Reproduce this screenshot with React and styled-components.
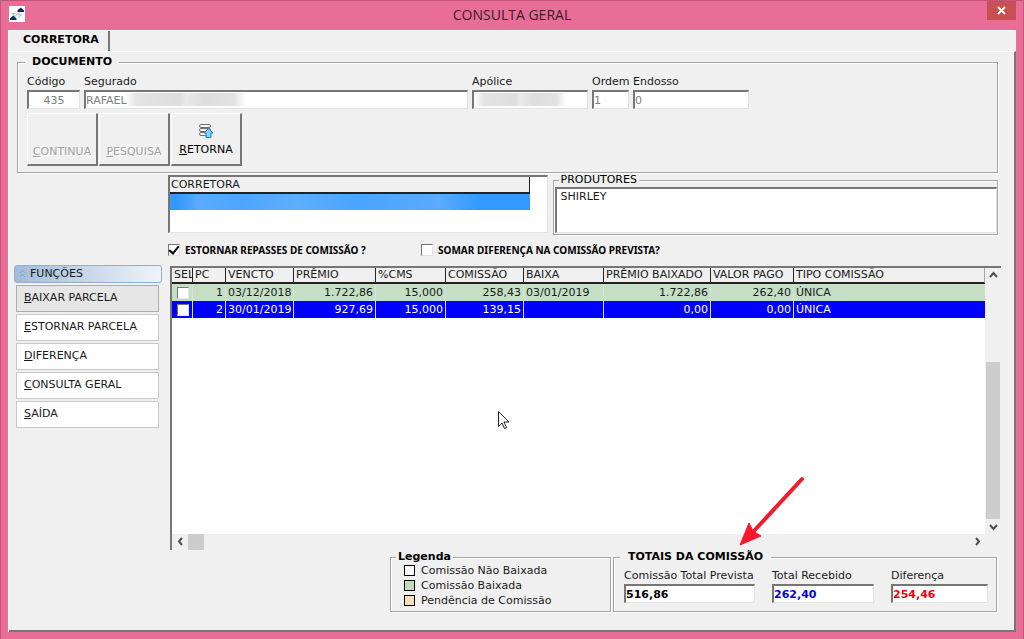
import React, { useState } from 'react';
import styled, { createGlobalStyle } from 'styled-components';

const GlobalStyle = createGlobalStyle`
  :root {
    --pink: #e86d97;
    --face: #f0f0f0;
    --shadow: #767676;
    --line: #a5a5a5;
    --ink: #1a1a1a;
  }
  * {
    box-sizing: border-box;
  }
  body {
    margin: 0;
    font-family: 'DejaVu Sans', Verdana, sans-serif;
    font-size: 11px;
    line-height: 14px;
    color: var(--ink);
  }
  button, input {
    font: inherit;
    color: inherit;
  }
`;

const Window = styled.div`
  position: relative;
  display: flex;
  flex-direction: column;
  min-height: 100vh;
  padding: 0 7px 8px;
  background: var(--pink);
  border: 1px solid #c4557d;
  border-bottom: 0;
`;

const TitleBar = styled.header`
  display: grid;
  grid-template-columns: 1fr auto 1fr;
  align-items: start;
  height: 29px;

  svg {
    display: block;
  }
  h1 {
    margin: 0;
    padding-top: 4px;
    font: 400 14px/20px 'Open Sans', sans-serif;
    color: #3a1c28;
  }
`;

const AppIcon = styled.span`
  padding: 5px 0 0 1px;
`;

const CloseButton = styled.button`
  justify-self: end;
  display: grid;
  place-items: center;
  width: 29px;
  height: 19px;
  padding: 0;
  border: 0;
  background: #c75050;
`;

const Client = styled.main`
  flex: 1;
  display: flex;
  flex-direction: column;
  background: var(--face);
  border-top: 1px solid #fff;
  border-left: 1px solid #fff;
`;

const TabStrip = styled.nav`
  display: flex;
  height: 20px;
`;

const Tab = styled.button`
  padding: 0 9px 2px 14px;
  border: 0;
  border-right: 2px solid var(--shadow);
  background: var(--face);
  font-weight: 700;
  color: #000;
`;

const Page = styled.div`
  flex: 1;
  padding: 4px 15px 18px 5px;
  border: 2px solid var(--shadow);
  border-top: 1px solid #fff;
  border-left: 0;
`;

const Group = styled.fieldset`
  min-width: 0;
  margin: 0;
  padding: ${({ $pad }) => $pad || '0'};
  border: 1px solid var(--line);
  box-shadow: 1px 1px 0 #fff, inset 1px 1px 0 #fff;

  legend {
    padding: 0 ${({ $gap }) => $gap || '2px'};
    background: var(--face);
    font-weight: ${({ $bold }) => ($bold ? 700 : 400)};
    line-height: 12px;
    color: #000;
  }
`;

const DocumentGroup = styled(Group)`
  margin: 0 1px 2px 3px;

  legend {
    margin-left: -2px;
  }
`;

const Fields = styled.div`
  display: grid;
  grid-template-columns: 53px 384fr 116px 37px 116px 235fr;
  gap: 4px;
`;

const Field = styled.div`
  display: flex;
  flex-direction: column;
  gap: 1px;
  min-width: 0;

  label {
    white-space: nowrap;
  }
`;

const TextBox = styled.input`
  width: 100%;
  height: 19px;
  padding: 0;
  border: 2px solid var(--shadow);
  border-right: 1px solid #e3e3e3;
  border-bottom: 1px solid #e3e3e3;
  border-radius: 0;
  background: #fff;
  color: ${({ $color }) => $color || '#808080'};
  font-weight: ${({ $bold }) => ($bold ? 700 : 400)};
  text-align: ${({ $align }) => $align || 'left'};
  outline: 0;
`;

const MaskedBox = styled(TextBox)`
  background: linear-gradient(90deg, #fff, #e4e4e4 10px, #dedede 45%, #e9e9e9 50%, #dedede 65%, #e2e2e2 90%, #fff)
    ${({ $from }) => $from} 1px / ${({ $size }) => $size} 13px no-repeat #fff;
`;

const ButtonRow = styled.div`
  display: flex;
  gap: 1px;
  margin-top: 4px;
`;

const ToolButton = styled.button`
  display: flex;
  flex-direction: column;
  align-items: center;
  justify-content: flex-end;
  gap: 4px;
  width: 71px;
  height: 53px;
  padding: 0 0 ${({ disabled }) => (disabled ? '5px' : '7px')};
  border: 1px solid #fff;
  border-right: 2px solid var(--shadow);
  border-bottom: 2px solid var(--shadow);
  background: var(--face);
  color: #000;

  &:disabled {
    color: #a0a0a0;
    text-shadow: 1px 1px 0 #fff;
  }
`;

const Columns = styled.div`
  display: grid;
  grid-template-columns: 148px minmax(0, 1fr);
  column-gap: 6px;
`;

const Side = styled.aside`
  padding-top: 90px;
`;

const SideTitle = styled.h2`
  display: flex;
  align-items: center;
  gap: 4px;
  height: 18px;
  margin: 0 0 2px;
  padding-left: 4px;
  border: 1px solid #8fb0cf;
  border-radius: 3px;
  background: linear-gradient(90deg, #a0bcda, #f0f3f7);
  font-size: 11px;
  font-weight: 400;
`;

const SideList = styled.div`
  display: flex;
  flex-direction: column;
  gap: 2px;
  margin: 0 3px 0 2px;
`;

const SideButton = styled.button`
  height: 27px;
  padding: 0 7px 1px;
  border: 1px solid ${({ $active }) => ($active ? '#adadad' : '#c8c8c8')};
  background: ${({ $active }) => ($active ? '#e6e6e6' : '#fff')};
  text-align: left;
`;

const TopLists = styled.div`
  display: grid;
  grid-template-columns: 380fr 446fr;
  column-gap: 5px;
  margin-right: 1px;
`;

const Sunken = styled.div`
  border: 2px solid var(--shadow);
  border-right: 1px solid #e3e3e3;
  border-bottom: 1px solid #e3e3e3;
  background: #fff;
`;

const BrokerList = styled(Sunken)`
  height: 58px;
  padding-right: 17px;
`;

const BrokerHead = styled.div`
  height: 17px;
  padding: 1px;
  border-right: 1px solid #222;
  border-bottom: 2px solid #222;
  background: var(--face);
`;

const BrokerRow = styled.div`
  height: 16px;
  background: linear-gradient(90deg, #3399ff 2%, #5aabff 8%, #4ea5ff 20%, #5eaeff 35%, #4ba4ff 52%, #5babff 75%, #3399ff 86%);
`;

const ProducerGroup = styled(Group)`
  height: 61px;
  margin-top: -1px;
  padding: 1px 0 0 1px;

  legend {
    margin-left: 4px;
  }
  ${Sunken} {
    height: 46px;
    padding: 1px 4px;
  }
`;

const Options = styled.div`
  display: grid;
  grid-template-columns: 253px 1fr;
  padding: 8px 0 9px;
`;

const Check = styled.label`
  display: flex;
  align-items: center;
  gap: 5px;
  font: 700 10px/14px 'Noto Sans', sans-serif;
  color: #000;
`;

const CheckBox = styled.input`
  appearance: none;
  display: grid;
  place-items: center;
  width: 12px;
  height: 12px;
  margin: 0;
  border: 1px solid #e3e3e3;
  border-top-color: var(--shadow);
  border-left-color: var(--shadow);
  background: #fff;

  &:checked::before {
    content: '';
    width: 4px;
    height: 8px;
    margin-top: -2px;
    border: solid #000;
    border-width: 0 2px 2px 0;
    transform: rotate(40deg);
  }
`;

const DataGrid = styled.div`
  display: grid;
  grid-template-columns: minmax(0, 1fr) 16px;
  grid-template-rows: 266px 16px;
  margin: 0 -2px 0 2px;
  border-top: 2px solid var(--shadow);
  border-left: 2px solid var(--shadow);
`;

const TableArea = styled.div`
  overflow: hidden;
  background: #fff;
`;

const Table = styled.table`
  width: 100%;
  table-layout: fixed;
  border-collapse: separate;
  border-spacing: 0;

  th, td {
    padding: 0 2px;
    overflow: hidden;
    white-space: nowrap;
    border-right: 1px solid #d8e6d8;
  }
  th {
    height: 16px;
    padding: 0 0 0 2px;
    border-right: 1px solid #222;
    border-bottom: 2px solid #222;
    background: var(--face);
    font-weight: 400;
    line-height: 14px;
    text-align: left;
  }
  th:last-child {
    border-right: 1px solid var(--line);
  }
  td:last-child {
    border-right: 0;
  }
  input {
    margin: 0 3px;
  }
`;

const Row = styled.tr`
  background: ${({ $current }) => ($current ? '#0000ff' : '#c4dfc4')};
  color: ${({ $current }) => ($current ? '#fff' : '#1a1a1a')};
  line-height: 17px;
`;

const Cell = styled.td`
  height: 17px;
  text-align: ${({ $num }) => ($num ? 'right' : 'left')};
`;

const ScrollBar = styled.div`
  display: flex;
  flex-direction: ${({ $vertical }) => ($vertical ? 'column' : 'row')};
  background: var(--face);
`;

const ScrollButton = styled.button`
  display: grid;
  place-items: center;
  width: 16px;
  height: 15px;
  padding: 0;
  border: 0;
  background: transparent;
`;

const Track = styled.div`
  flex: 1;
  display: flex;
  flex-direction: inherit;
  justify-content: ${({ $end }) => ($end ? 'flex-end' : 'flex-start')};
`;

const Thumb = styled.div`
  flex: 0 0 ${({ $size }) => $size};
  margin: ${({ $vertical }) => ($vertical ? '0 1px' : '0')};
  background: #cdcdcd;
`;

const Footer = styled.div`
  display: grid;
  grid-template-columns: 221px 384px;
  justify-content: end;
  gap: 2px;
  margin: 1px 2px 0 0;
`;

const LegendGroup = styled(Group)`
  height: 61px;

  legend {
    margin-left: 5px;
  }
  ul {
    margin: 0;
    padding: 0 0 0 13px;
    list-style: none;
  }
  li {
    display: flex;
    align-items: center;
    gap: 6px;
    height: 15px;
  }
`;

const Swatch = styled.span`
  width: 11px;
  height: 11px;
  border: 1px solid #000;
  background: ${({ $color }) => $color};
`;

const TotalsGroup = styled(Group)`
  legend {
    margin-left: -4px;
  }
`;

const Totals = styled.div`
  display: grid;
  grid-template-columns: 131px 102px 97px;
  justify-content: space-between;
`;

const Arrow = styled.svg`
  position: absolute;
  left: 738px;
  top: 475px;
  pointer-events: none;
`;

const Pointer = styled.svg`
  position: absolute;
  left: 496px;
  top: 409px;
  pointer-events: none;
`;

const columns = [
  { name: 'SEL', width: 21 },
  { name: 'PC', width: 33 },
  { name: 'VENCTO', width: 68 },
  { name: 'PRÊMIO', width: 82 },
  { name: '%CMS', width: 70 },
  { name: 'COMISSÃO', width: 78 },
  { name: 'BAIXA', width: 80 },
  { name: 'PRÊMIO BAIXADO', width: 107 },
  { name: 'VALOR PAGO', width: 83 },
  { name: 'TIPO COMISSÃO' },
];

const installments = [
  ['1', '03/12/2018', '1.722,86', '15,000', '258,43', '03/01/2019', '1.722,86', '262,40', 'ÚNICA'],
  ['2', '30/01/2019', '927,69', '15,000', '139,15', '', '0,00', '0,00', 'ÚNICA'],
];

const numeric = [0, 2, 3, 4, 6, 7];

const actions = ['BAIXAR PARCELA', 'ESTORNAR PARCELA', 'DIFERENÇA', 'CONSULTA GERAL', 'SAÍDA'];

const legend = [
  { label: 'Comissão Não Baixada', color: '#fff' },
  { label: 'Comissão Baixada', color: '#c0dcc0' },
  { label: 'Pendência de Comissão', color: '#ffdfb9' },
];

const totals = [
  { id: 'prevista', label: 'Comissão Total Prevista', value: '516,86', color: '#000' },
  { id: 'recebido', label: 'Total Recebido', value: '262,40', color: '#0000e0' },
  { id: 'diferenca', label: 'Diferença', value: '254,46', color: '#f00010' },
];

const Hotkey = ({ children }) => (
  <span>
    <u>{children[0]}</u>
    {children.slice(1)}
  </span>
);

const Chevron = ({ d }) => (
  <svg width='9' height='9' viewBox='0 0 9 9' fill='none' stroke='#505050' strokeWidth='2'>
    <path d={d} />
  </svg>
);

const App = () => {
  const [reverse, setReverse] = useState(true);
  const [addDiff, setAddDiff] = useState(false);
  const [active, setActive] = useState(actions[0]);

  return (
    <>
      <GlobalStyle />
      <Window>
        <TitleBar>
          <AppIcon>
            <svg width='16' height='16' viewBox='0 0 16 16'>
              <rect width='16' height='16' fill='#fff' />
              <path d='M2 7h5l-2.500 3z' fill='#c3c8d0' />
              <path d='M9 8h5l-4 4z' fill='#c9ced6' />
              <path d='M5 11l6-5' stroke='#c3c8d0' strokeWidth='1.500' />
              <path d='M8.500 6h6.500v-1.500L11.700 1.500 8.500 4.500z' fill='#12226e' />
              <path d='M1 14h6.500v-1.500L4.200 9.500 1 12.500z' fill='#12226e' />
            </svg>
          </AppIcon>
          <h1>CONSULTA GERAL</h1>
          <CloseButton aria-label='Fechar'>
            <svg width='9' height='9' viewBox='0 0 9 9' stroke='#fff' strokeWidth='1.800'>
              <path d='M1 1l7 7M8 1L1 8' />
            </svg>
          </CloseButton>
        </TitleBar>
        <Client>
          <TabStrip>
            <Tab>CORRETORA</Tab>
          </TabStrip>
          <Page>
            <DocumentGroup $bold $pad='7px 9px 6px' $gap='7px'>
              <legend>DOCUMENTO</legend>
              <Fields>
                <Field>
                  <label htmlFor='codigo'>Código</label>
                  <TextBox id='codigo' defaultValue='435' $align='center' readOnly />
                </Field>
                <Field>
                  <label htmlFor='segurado'>Segurado</label>
                  <MaskedBox id='segurado' defaultValue='RAFAEL' $from='40px' $size='120px' readOnly />
                </Field>
                <Field>
                  <label htmlFor='apolice'>Apólice</label>
                  <MaskedBox id='apolice' $from='0' $size='92px' readOnly />
                </Field>
                <Field>
                  <label htmlFor='ordem'>Ordem</label>
                  <TextBox id='ordem' defaultValue='1' readOnly />
                </Field>
                <Field>
                  <label htmlFor='endosso'>Endosso</label>
                  <TextBox id='endosso' defaultValue='0' readOnly />
                </Field>
              </Fields>
              <ButtonRow>
                <ToolButton disabled>
                  <Hotkey>CONTINUA</Hotkey>
                </ToolButton>
                <ToolButton disabled>
                  <Hotkey>PESQUISA</Hotkey>
                </ToolButton>
                <ToolButton>
                  <svg width='16' height='16' viewBox='0 0 16 16' fill='#f8f8f8' stroke='#707070'>
                    <rect x='1.500' y='1.500' width='11' height='3' rx='1.500' />
                    <rect x='1.500' y='5.500' width='11' height='3' rx='1.500' />
                    <rect x='1.500' y='9.500' width='11' height='3' rx='1.500' />
                    <path d='M10.500 5.500l4.500 4.500h-2v4.500H8V10H6z' fill='#7fd0fa' stroke='#2a7fc0' />
                  </svg>
                  <Hotkey>RETORNA</Hotkey>
                </ToolButton>
              </ButtonRow>
            </DocumentGroup>
            <Columns>
              <Side>
                <SideTitle>
                  <svg width='7' height='10' viewBox='0 0 7 10' fill='none' stroke='#8aa2c4'>
                    <path d='M1 4l2.500-3L6 4M1 8l2.500-3L6 8' />
                  </svg>
                  FUNÇÕES
                </SideTitle>
                <SideList>
                  {actions.map((action) => (
                    <SideButton key={action} $active={action === active} onClick={() => setActive(action)}>
                      <Hotkey>{action}</Hotkey>
                    </SideButton>
                  ))}
                </SideList>
              </Side>
              <section>
                <TopLists>
                  <BrokerList>
                    <BrokerHead>CORRETORA</BrokerHead>
                    <BrokerRow />
                  </BrokerList>
                  <ProducerGroup>
                    <legend>PRODUTORES</legend>
                    <Sunken>SHIRLEY</Sunken>
                  </ProducerGroup>
                </TopLists>
                <Options>
                  <Check>
                    <CheckBox type='checkbox' checked={reverse} onChange={() => setReverse(!reverse)} />
                    ESTORNAR REPASSES DE COMISSÃO ?
                  </Check>
                  <Check>
                    <CheckBox type='checkbox' checked={addDiff} onChange={() => setAddDiff(!addDiff)} />
                    SOMAR DIFERENÇA NA COMISSÃO PREVISTA?
                  </Check>
                </Options>
                <DataGrid>
                  <TableArea>
                    <Table>
                      <colgroup>
                        {columns.map(({ name, width }) => (
                          <col key={name} width={width} />
                        ))}
                      </colgroup>
                      <thead>
                        <tr>
                          {columns.map(({ name }) => (
                            <th key={name}>{name}</th>
                          ))}
                        </tr>
                      </thead>
                      <tbody>
                        {installments.map((row, index) => (
                          <Row key={row[0]} $current={index === 1}>
                            <Cell>
                              <CheckBox type='checkbox' aria-label={`Parcela ${row[0]}`} />
                            </Cell>
                            {row.map((value, i) => (
                              <Cell key={i} $num={numeric.includes(i)}>
                                {value}
                              </Cell>
                            ))}
                          </Row>
                        ))}
                      </tbody>
                    </Table>
                  </TableArea>
                  <ScrollBar $vertical>
                    <ScrollButton aria-label='Acima'>
                      <Chevron d='M1 6l3.500-4L8 6' />
                    </ScrollButton>
                    <Track $end>
                      <Thumb $vertical $size='157px' />
                    </Track>
                    <ScrollButton aria-label='Abaixo'>
                      <Chevron d='M1 3l3.500 4L8 3' />
                    </ScrollButton>
                  </ScrollBar>
                  <ScrollBar>
                    <ScrollButton aria-label='Esquerda'>
                      <Chevron d='M6 1L3 4.500 6 8' />
                    </ScrollButton>
                    <Track>
                      <Thumb $size='16px' />
                    </Track>
                    <ScrollButton aria-label='Direita'>
                      <Chevron d='M3 1l3 3.500L3 8' />
                    </ScrollButton>
                  </ScrollBar>
                </DataGrid>
                <Footer>
                  <LegendGroup $bold>
                    <legend>Legenda</legend>
                    <ul>
                      {legend.map(({ label, color }) => (
                        <li key={label}>
                          <Swatch $color={color} />
                          {label}
                        </li>
                      ))}
                    </ul>
                  </LegendGroup>
                  <TotalsGroup $bold $pad='6px 8px 0 10px' $gap='8px'>
                    <legend>TOTAIS DA COMISSÃO</legend>
                    <Totals>
                      {totals.map(({ id, label, value, color }) => (
                        <Field key={id}>
                          <label htmlFor={id}>{label}</label>
                          <TextBox id={id} defaultValue={value} $color={color} $bold readOnly />
                        </Field>
                      ))}
                    </Totals>
                  </TotalsGroup>
                </Footer>
              </section>
            </Columns>
          </Page>
        </Client>
        <Arrow width='68' height='72' viewBox='0 0 68 72'>
          <path d='M63 3L14 56' stroke='#ee1c2e' strokeWidth='4' strokeLinecap='round' />
          <path d='M1 69L10 47l4 8 8 5z' fill='#f8182c' stroke='#f8182c' />
        </Arrow>
        <Pointer width='14' height='20' viewBox='0 0 14 20'>
          <path d='M1.500 1.500v15l3.500-3.500 2.500 5.500 2-1-2.500-5.500h5z' fill='#fff' stroke='#222' />
        </Pointer>
      </Window>
    </>
  );
};

export default App;
